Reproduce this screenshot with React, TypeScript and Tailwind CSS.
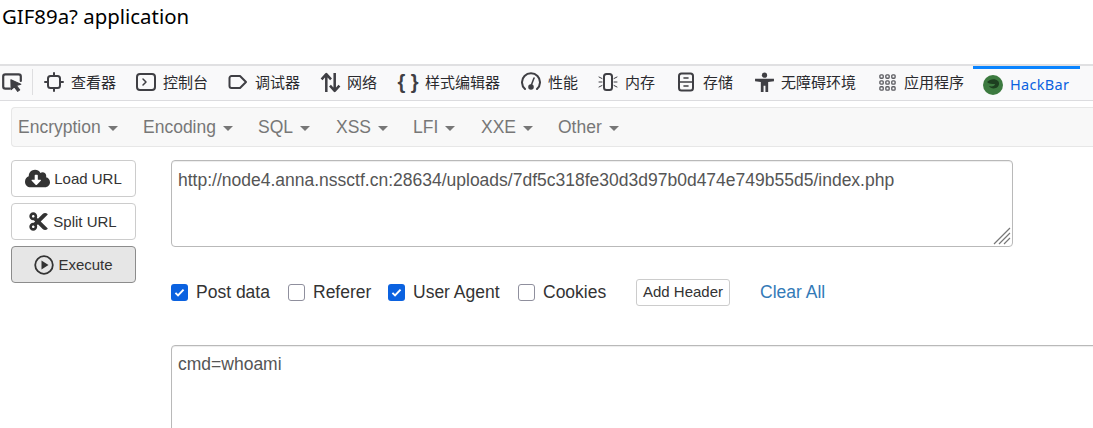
import { FaCloudDownloadAlt, FaCut } from 'react-icons/fa'
import type { ReactNode } from 'react'

type ToolProps = {
  icon: ReactNode
  label: string
  width: string
}

function Check({ checked, label, className }: { checked?: boolean; label: string; className: string }) {
  return (
    <label className={`flex items-center ${className}`}>
      {checked ? (
        <span className="w-[17px] h-[17px] rounded-[3px] bg-[#0b62e0] flex items-center justify-center">
          <svg viewBox="0 0 16 16" className="w-[13px] h-[13px]" fill="none" stroke="#fff" strokeWidth="2.4">
            <path d="M3 8.500l3.200 3L13 4.500" />
          </svg>
        </span>
      ) : (
        <span className="w-[17px] h-[17px] rounded-[3px] bg-white border border-[#8f8f9d]" />
      )}
      <span className="ml-2 text-[#333] text-[17.5px] leading-[22px] -mt-[1px]">{label}</span>
    </label>
  )
}

function Tool({ icon, label, width }: ToolProps) {
  return (
    <div className={`flex items-center shrink-0 ${width}`}>
      <span className="w-[22px] h-[22px] flex items-center justify-center shrink-0">{icon}</span>
      <span className="ml-[6px] text-[15px] text-[#2a2a2e] whitespace-nowrap">{label}</span>
    </div>
  )
}

function NavItem({ label, width }: { label: string; width?: string }) {
  return (
    <div className={`flex items-center shrink-0 text-[#777] text-[17.5px] ${width}`}>
      <span>{label}</span>
      <span className="ml-[7px] mt-[2px] w-0 h-0 border-x-[5px] border-x-transparent border-t-[5px] border-t-[#777]" />
    </div>
  )
}

function SideButton({ icon, label, active }: { icon: ReactNode; label: string; active?: boolean }) {
  return (
    <div
      className={`h-[37px] w-[125px] rounded-[4px] border flex items-center justify-center text-[15px] text-[#333] ${
        active ? 'bg-[#e6e6e6] border-[#8c8c8c]' : 'bg-white border-[#ccc]'
      }`}
    >
      {icon}
      <span className="ml-[4px] mt-[1px]">{label}</span>
    </div>
  )
}

const iconStroke = {
  fill: 'none',
  stroke: '#3f3f44',
  strokeWidth: 2,
  strokeLinecap: 'round' as const,
  strokeLinejoin: 'round' as const,
}

const gridCells = [2, 8.25, 14.5]

export default function App() {
  return (
    <div className="w-[1093px] h-[428px] overflow-hidden bg-white font-['Liberation_Sans','Noto_Sans_CJK_SC',sans-serif]">
      <div className="h-[64px] pl-[2px] pt-[2px] text-[20.4px] leading-[28px] text-black font-['Noto_Sans',sans-serif]">
        GIF89a? application
      </div>

      {/* devtools toolbar */}
      <div className="h-[37px] pb-[2px] bg-[#f9f9fa] border-t-2 border-t-[#e0e0e2] border-b border-b-[#dcdcdf] flex items-center relative font-['Noto_Sans_CJK_SC',sans-serif]">
        <div className="w-[33px] h-[26px] border-r border-[#dedee0] flex items-center pl-[1px] shrink-0">
          <svg viewBox="0 0 20 20" className="w-[22px] h-[22px]" {...iconStroke}>
            <path d="M8 16H4a2 2 0 0 1-2-2V5a2 2 0 0 1 2-2h12a2 2 0 0 1 2 2v4" />
            <path d="M9 8l9 4-4 1.200 3 4-1.800 1.300-3-4-3 2.500z" fill="#3f3f44" strokeWidth="1" />
          </svg>
        </div>
        <div className="flex items-center ml-[10px]">
          <Tool
            width="w-[92px]"
            label="查看器"
            icon={
              <svg viewBox="0 0 20 20" className="w-[20px] h-[20px]" {...iconStroke}>
                <rect x="4" y="4" width="12" height="12" rx="2.500" />
                <path d="M10 1v3M10 16v3M1 10h3M16 10h3" />
              </svg>
            }
          />
          <Tool
            width="w-[92px]"
            label="控制台"
            icon={
              <svg viewBox="0 0 20 20" className="w-[20px] h-[20px]" {...iconStroke}>
                <rect x="1" y="2" width="18" height="16" rx="3" />
                <path d="M7 7l3 3-3 3" strokeWidth="1.500" />
              </svg>
            }
          />
          <Tool
            width="w-[92px]"
            label="调试器"
            icon={
              <svg viewBox="0 0 20 20" className="w-[20px] h-[20px]" {...iconStroke}>
                <path d="M3.500 4H12l6 6-6 6H3.500A2 2 0 0 1 1.500 14V6a2 2 0 0 1 2-2z" />
              </svg>
            }
          />
          <Tool
            width="w-[78px]"
            label="网络"
            icon={
              <svg viewBox="0 0 20 20" className="w-[21px] h-[21px]" {...iconStroke} strokeWidth="2.400" strokeLinecap="butt">
                <path d="M6 19V2M1.500 7L6 2l4.500 5M14 1v17M9.500 13l4.500 5 4.500-5" />
              </svg>
            }
          />
          <Tool
            width="w-[123px]"
            label="样式编辑器"
            icon={
              <span className="text-[20px] font-bold leading-none whitespace-nowrap text-[#3f3f44] font-['Liberation_Sans',sans-serif]">
                {'{ }'}
              </span>
            }
          />
          <Tool
            width="w-[77px]"
            label="性能"
            icon={
              <svg viewBox="0 0 20 20" className="w-[20px] h-[20px]" {...iconStroke}>
                <path d="M4 17a9 9 0 1 1 12 0" />
                <path d="M13 6l-3 8" strokeWidth="1.500" />
                <circle cx="10" cy="15" r="1.800" fill="#3f3f44" />
              </svg>
            }
          />
          <Tool
            width="w-[78px]"
            label="内存"
            icon={
              <svg viewBox="0 0 20 20" className="w-[20px] h-[20px]" {...iconStroke}>
                <rect x="6" y="2" width="8" height="16" rx="2.500" />
                <path d="M1 5l3 1.500M1 10h3M1 15l3-1.500M19 5l-3 1.500M19 10h-3M19 15l-3-1.500" strokeWidth="1" />
              </svg>
            }
          />
          <Tool
            width="w-[78px]"
            label="存储"
            icon={
              <svg viewBox="0 0 20 20" className="w-[20px] h-[20px]" {...iconStroke}>
                <rect x="3" y="1.500" width="14" height="17" rx="2.500" />
                <path d="M3 10h14M8 6h4M8 14h4" strokeWidth="1.600" />
              </svg>
            }
          />
          <Tool
            width="w-[123px]"
            label="无障碍环境"
            icon={
              <svg viewBox="0 0 20 20" className="w-[21px] h-[21px]" fill="#3f3f44">
                <circle cx="10" cy="3" r="2.500" />
                <path d="M1 6.500h18v2.300l-5.500.7V19h-2.600v-6h-1.800v6H6.500V9.500L1 8.800z" />
              </svg>
            }
          />
          <Tool
            width="w-[96px]"
            label="应用程序"
            icon={
              <svg viewBox="0 0 20 20" className="w-[19px] h-[19px]" fill="none" stroke="#5b5b60" strokeWidth="1.400">
                {gridCells.map((y) =>
                  gridCells.map((x) => <rect key={`${x}-${y}`} x={x} y={y} width="3.500" height="3.500" rx="1" />),
                )}
              </svg>
            }
          />
        </div>
        <div className="absolute left-[973px] top-0 w-[107px] h-[34px] border-t-[3px] border-t-[#0a84ff] flex items-center pl-[10px]">
          <svg viewBox="0 0 20 20" className="w-[20px] h-[20px]">
            <circle cx="10" cy="10" r="10" fill="#3c7a3f" />
            <path d="M4 7c3-3 8-4 11-1 2 2 1 6-2 7-3 1-6 0-7-2 3 1 6 0 6-2-3 0-6 0-8-2z" fill="#1d3f20" />
          </svg>
          <span className="ml-[7px] text-[14.5px] text-[#0b62e0] font-['Noto_Sans',sans-serif] tracking-[0.3px]">HackBar</span>
        </div>
      </div>

      {/* hackbar menu */}
      <div className="mt-[6px] ml-[11px] h-[40px] bg-[#f8f8f8] border border-r-0 border-[#e7e7e7] rounded-l-[4px] flex items-center pl-[6px]">
        <NavItem label="Encryption" width="w-[125px]" />
        <NavItem label="Encoding" width="w-[115px]" />
        <NavItem label="SQL" width="w-[78px]" />
        <NavItem label="XSS" width="w-[77px]" />
        <NavItem label="LFI" width="w-[68px]" />
        <NavItem label="XXE" width="w-[77px]" />
        <NavItem label="Other" />
      </div>

      {/* body */}
      <div className="flex mt-[13px] ml-[11px]">
        <div className="w-[125px] flex flex-col gap-[6px] shrink-0">
          <SideButton icon={<FaCloudDownloadAlt className="w-[25px] h-[25px] text-[#333]" />} label="Load URL" />
          <SideButton icon={<FaCut className="w-[21px] h-[21px] text-[#333] -ml-[2px]" />} label="Split URL" />
          <SideButton
            active
            icon={
              <svg viewBox="0 0 20 20" className="w-[20px] h-[20px]" fill="none" stroke="#333" strokeWidth="1.800">
                <circle cx="10" cy="10" r="8.800" />
                <path d="M7.500 5.500l7 4.500-7 4.500z" fill="#333" stroke="none" />
              </svg>
            }
            label="Execute"
          />
        </div>
        <div className="ml-[35px] flex-1 min-w-0">
          <div className="relative w-[842px] h-[87px] rounded-[4px] border border-[#b9b9b9] shadow-[inset_0_1px_1px_rgba(0,0,0,0.075)] bg-white px-[6px] pt-[8px] text-[17.5px] leading-[22px] text-[#555]">
            http://node4.anna.nssctf.cn:28634/uploads/7df5c318fe30d3d97b0d474e749b55d5/index.php
            <svg viewBox="0 0 18 18" className="absolute right-[1px] bottom-[1px] w-[18px] h-[18px]" stroke="#777" strokeWidth="1.200">
              <path d="M1 17L17 1M6 17L17 6M11 17l6-6" />
            </svg>
          </div>
          <div className="flex items-center mt-[31px] h-[28px]">
            <Check checked label="Post data" className="w-[117px]" />
            <Check label="Referer" className="w-[100px]" />
            <Check checked label="User Agent" className="w-[130px]" />
            <Check label="Cookies" className="w-[118px]" />
            <div className="h-[27px] px-[6px] pt-[1px] rounded-[3px] border border-[#ccc] bg-white flex items-center text-[15px] text-[#333] shrink-0">
              Add Header
            </div>
            <span className="ml-[30px] text-[17.5px] text-[#337ab7]">Clear All</span>
          </div>
          <div className="mt-[39px] w-[940px] h-[120px] rounded-[4px] border border-[#b9b9b9] shadow-[inset_0_1px_1px_rgba(0,0,0,0.075)] bg-white px-[6px] pt-[7px] text-[17.5px] leading-[22px] text-[#555]">
            cmd=whoami
          </div>
        </div>
      </div>
    </div>
  )
}
